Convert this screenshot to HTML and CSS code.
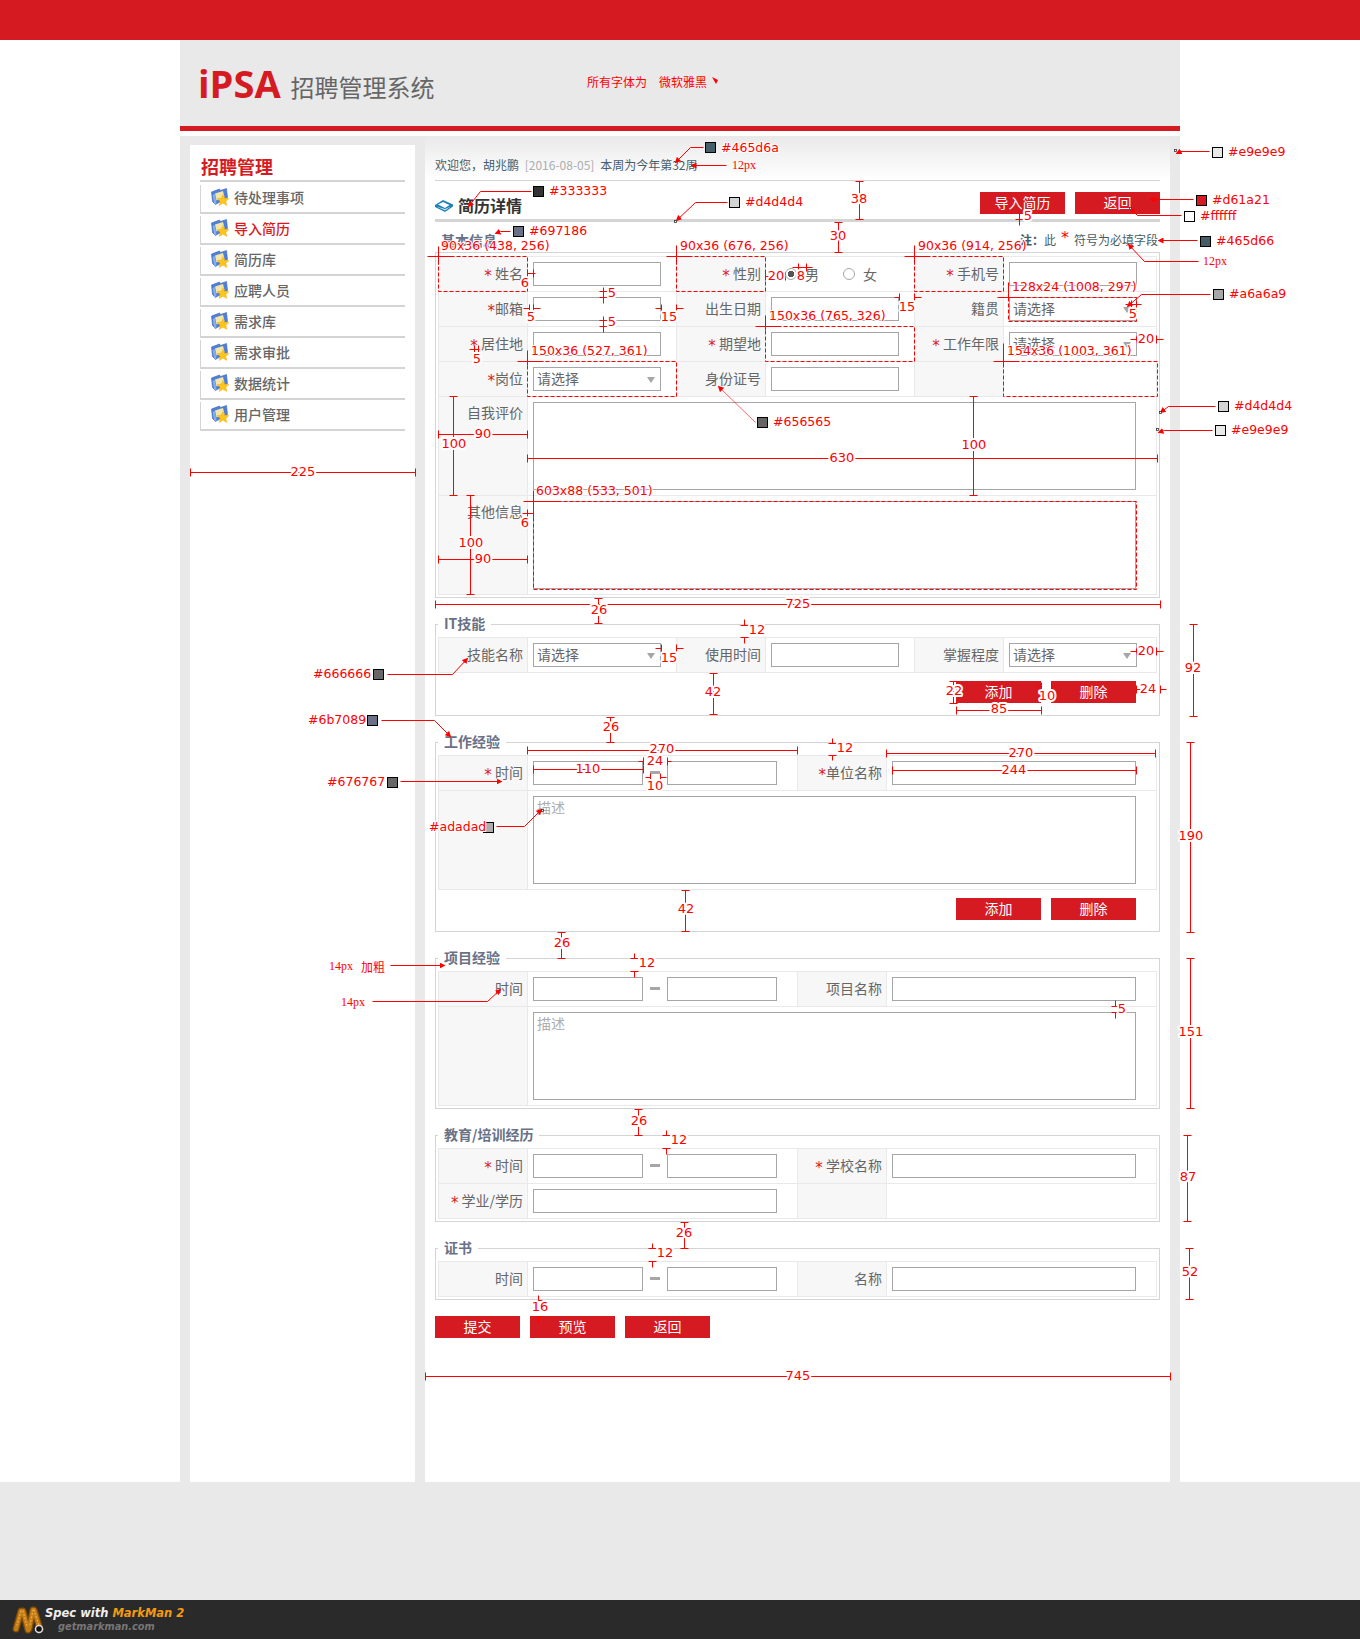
FILE: index.html

```html
<!DOCTYPE html>
<html>

<head>
<title>招聘管理系统</title>
<meta charset="UTF-8">
<link rel="stylesheet" href="styles.css">
</head>

<body>
<svg width="0" height="0" class="defs">
  <symbol id="folder" viewBox="0 0 18 18">
    <path d="M.5 4 8.500 1l1 1.500L15.500.5l1 9-12 7L1.500 13.500z" fill="#4f7fd6" stroke="#3a66b8" stroke-width=".6"/>
    <path d="M4 5.500l8-2.500 1.500 6-8 3.500z" fill="#f3e6a6"/>
    <path d="M1.500 7 4 6l1.500 9.500-2 1z" fill="#86aeea"/>
    <path d="M12 6.500l1.800 3.700 4.200.4-3.100 2.700 1 4.200L12 15.300l-3.900 2.200 1-4.200-3.100-2.700 4.200-.4z" fill="#fdc41c" stroke="#f0a810" stroke-width=".4"/>
  </symbol>
</svg>

<div class="topbar"></div>

<div class="wrap">
  <div class="head">
    <span class="logo">iPSA</span>
    <span class="sysname">招聘管理系统</span>
  </div>

  <div class="cols">
    <div class="side">
      <h2>招聘管理</h2>
      <ul>
        <li><svg class="ico"><use href="#folder"/></svg>待处理事项</li>
        <li class="on"><svg class="ico"><use href="#folder"/></svg>导入简历</li>
        <li><svg class="ico"><use href="#folder"/></svg>简历库</li>
        <li><svg class="ico"><use href="#folder"/></svg>应聘人员</li>
        <li><svg class="ico"><use href="#folder"/></svg>需求库</li>
        <li><svg class="ico"><use href="#folder"/></svg>需求审批</li>
        <li><svg class="ico"><use href="#folder"/></svg>数据统计</li>
        <li><svg class="ico"><use href="#folder"/></svg>用户管理</li>
      </ul>
    </div>

    <div class="main">
      <div class="welcome">欢迎您，胡兆鹏 <span class="date">[2016-08-05]</span> 本周为今年第32周</div>

      <div class="titlerow">
        <svg class="bookico" width="18" height="12" viewBox="0 0 18 12">
          <path d="M0 5 8 0l10 4.500v2L10 12 0 7z" fill="#1f7fb5"/>
          <path d="M3 4.500 8 2l6.500 3L10 8z" fill="#fff"/>
          <path d="M1.500 6.500 10 10.500l6-4-6 2.500z" fill="#bfe0f0"/>
        </svg>
        <h1>简历详情</h1>
        <button class="btn">导入简历</button>
        <button class="btn">返回</button>
      </div>

      <div class="noterow"><b>注：</b>此<i>*</i>符号为必填字段</div>

      <div class="fs first">
        <div class="legend">基本信息</div>
        <div class="rows">
          <div class="row r6">
            <div class="lab"><i>*</i> 姓名</div><div class="fld"><input></div>
            <div class="lab"><i>*</i> 性别</div>
            <div class="fld radios">
              <input type="radio" name="sex" checked><span>男</span>
              <input type="radio" name="sex"><span>女</span>
            </div>
            <div class="lab"><i>*</i> 手机号</div><div class="fld"><input></div>
          </div>
          <div class="row r6">
            <div class="lab"><i>*</i>邮箱</div><div class="fld"><input></div>
            <div class="lab">出生日期</div><div class="fld"><input></div>
            <div class="lab">籍贯</div><div class="fld"><div class="sel">请选择</div></div>
          </div>
          <div class="row r6">
            <div class="lab"><i>*</i> 居住地</div><div class="fld"><input></div>
            <div class="lab"><i>*</i> 期望地</div><div class="fld"><input></div>
            <div class="lab"><i>*</i> 工作年限</div><div class="fld"><div class="sel">请选择</div></div>
          </div>
          <div class="row r6">
            <div class="lab"><i>*</i>岗位</div><div class="fld"><div class="sel">请选择</div></div>
            <div class="lab">身份证号</div><div class="fld"><input></div>
            <div class="lab"></div><div class="fld"></div>
          </div>
          <div class="row wide">
            <div class="lab top">自我评价</div><div class="fld"><textarea></textarea></div>
          </div>
          <div class="row wide">
            <div class="lab top">其他信息</div><div class="fld"><textarea></textarea></div>
          </div>
        </div>
      </div>

      <div class="fs">
        <div class="legend">IT技能</div>
        <div class="rows">
          <div class="row r6">
            <div class="lab">技能名称</div><div class="fld"><div class="sel">请选择</div></div>
            <div class="lab">使用时间</div><div class="fld"><input></div>
            <div class="lab">掌握程度</div><div class="fld"><div class="sel">请选择</div></div>
          </div>
        </div>
        <div class="acts"><button class="btn">添加</button><button class="btn">删除</button></div>
      </div>

      <div class="fs">
        <div class="legend">工作经验</div>
        <div class="rows">
          <div class="row r4">
            <div class="lab"><i>*</i> 时间</div><div class="fld"><input class="d"><span class="dash"></span><input class="d"></div>
            <div class="lab"><i>*</i>单位名称</div><div class="fld"><input class="w"></div>
          </div>
          <div class="row wide">
            <div class="lab"></div><div class="fld"><textarea class="hint">描述</textarea></div>
          </div>
        </div>
        <div class="acts tight"><button class="btn">添加</button><button class="btn">删除</button></div>
      </div>

      <div class="fs">
        <div class="legend">项目经验</div>
        <div class="rows">
          <div class="row r4">
            <div class="lab">时间</div><div class="fld"><input class="d"><span class="dash"></span><input class="d"></div>
            <div class="lab">项目名称</div><div class="fld"><input class="w"></div>
          </div>
          <div class="row wide">
            <div class="lab"></div><div class="fld"><textarea class="hint">描述</textarea></div>
          </div>
        </div>
      </div>

      <div class="fs">
        <div class="legend">教育/培训经历</div>
        <div class="rows">
          <div class="row r4">
            <div class="lab"><i>*</i> 时间</div><div class="fld"><input class="d"><span class="dash"></span><input class="d"></div>
            <div class="lab"><i>*</i> 学校名称</div><div class="fld"><input class="w"></div>
          </div>
          <div class="row r4">
            <div class="lab"><i>*</i> 学业/学历</div><div class="fld"><input class="m"></div>
            <div class="lab"></div><div class="fld"></div>
          </div>
        </div>
      </div>

      <div class="fs">
        <div class="legend">证书</div>
        <div class="rows">
          <div class="row r4">
            <div class="lab">时间</div><div class="fld"><input class="d"><span class="dash"></span><input class="d"></div>
            <div class="lab">名称</div><div class="fld"><input class="w"></div>
          </div>
        </div>
      </div>

      <div class="submit"><button class="btn">提交</button><button class="btn">预览</button><button class="btn">返回</button></div>
    </div>
  </div>
</div>

<div class="under"></div>

<div class="foot">
  <svg class="mm" width="32" height="29" viewBox="0 0 32 29">
    <g fill="none" stroke-linecap="round">
      <path d="M4 24 9 6M11 6l5 19M17 24 21 5M22 5l6 19" stroke="#7d4a08" stroke-width="7"/>
      <path d="M4 24 9 6M11 6l5 19M17 24 21 5M22 5l6 19" stroke="#c47c14" stroke-width="4.500"/>
      <path d="M9 6 5 20M11 6l4 15M21 5l-3 15M22 5l5 16" stroke="#eeb050" stroke-width="1.200" stroke-dasharray="1 2.500"/>
    </g>
    <circle cx="27" cy="24" r="3.500" fill="#111" stroke="#ddd" stroke-width="1.500"/>
  </svg>
  <div class="mmtext">
    <div class="l1">Spec with <em>MarkMan 2</em></div>
    <div class="l2">getmarkman.com</div>
  </div>
</div>

<!-- markman annotations lie on top of the page -->
<svg class="marks" width="1360" height="1639" viewBox="0 0 1360 1639">
  <defs>
    <marker id="tip" markerUnits="userSpaceOnUse" markerWidth="6" markerHeight="6" refX="5" refY="3" orient="auto">
      <path d="M0 0 6 3 0 6z" fill="#f00"/>
    </marker>
  </defs>

  <g transform="translate(.5 .5)">
    <!-- selection boxes -->
    <g class="box">
      <rect x="438" y="256" width="89" height="35"/>
      <rect x="676" y="256" width="89" height="35"/>
      <rect x="914" y="256" width="89" height="35"/>
      <rect x="1008" y="297" width="128" height="24"/>
      <rect x="765" y="326" width="149" height="35"/>
      <rect x="527" y="361" width="149" height="35"/>
      <rect x="1003" y="361" width="154" height="35"/>
      <rect x="533" y="501" width="603" height="88"/>
    </g>

    <g class="ln">
      <!-- box corners -->
      <path d="M427 256H453M438 246V264M666 256H691M676 245V264M904 256H929M914 245V264"/>
      <path d="M997 297H1020M1008 282V300M755 326H780M765 315V330M517 361H540M527 350V365M993 361H1016M1003 343V365M523 501H560M533 490V505"/>

      <!-- top of page -->
      <path d="M190 472H415M190 468v8M415 468v8"/>
      <path d="M859 181V219M855 181h8M855 219h8"/>
      <path d="M838 222V252M834 222h8M834 252h8"/>
      <path d="M1019 210V225M1015 219h8"/>
      <path d="M527 273H535M527 269v8M533 269v8"/>
      <path d="M603 287V303M599 291h8M599 297h8"/>
      <path d="M603 316V332M599 320h8M599 326h8"/>
      <path d="M523 308H529M533 308H540M529 304v8M533 304v8"/>
      <path d="M655 308H661M676 308H683M661 304v8M676 304v8"/>
      <path d="M894 297H899M914 297H921M899 293v8M914 293v8"/>
      <path d="M655 648H661M676 648H683M661 644v8M676 644v8"/>
      <path d="M469 349H479M474 345v8M478 345v8"/>
      <path d="M765 276H785M765 272v8M785 272v8"/>
      <path d="M792 267H812M798 263v8M806 263v8"/>
      <path d="M1125 304H1141M1131 300v8M1136 300v8"/>
      <path d="M1130 339H1136M1156 339H1163M1136 335v8M1156 335v8"/>
      <path d="M1130 651H1136M1156 651H1163M1136 647v8M1156 647v8"/>
      <path d="M1136 689H1140M1160 689H1166M1136 685v8M1160 685v8"/>
      <path d="M953 681V703M949 681h8M949 703h8"/>
      <path d="M1036 686H1041M1051 686H1056M1041 682v8M1051 682v8"/>
      <path d="M956 710H1041M956 706v8M1041 706v8"/>

      <!-- right hand heights -->
      <path d="M1193 624V716M1189 624h8M1189 716h8"/>
      <path d="M1190 742V932M1186 742h8M1186 932h8"/>
      <path d="M1190 958V1108M1186 958h8M1186 1108h8"/>
      <path d="M1187 1135V1221M1183 1135h8M1183 1221h8"/>
      <path d="M1189 1248V1299M1185 1248h8M1185 1299h8"/>

      <!-- between the groups -->
      <path d="M435 604H1160M435 600v8M1160 600v8"/>
      <path d="M598 598V623M594 598h8M594 623h8"/>
      <path d="M744 619V625M744 637V643M740 625h8M740 637h8"/>
      <path d="M713 673V714M709 673h8M709 714h8"/>
      <path d="M610 717V742M606 717h8M606 742h8"/>
      <path d="M527 750H797M527 746v8M797 746v8"/>
      <path d="M832 738V743M832 755V760M828 743h8M828 755h8"/>
      <path d="M886 753H1155M886 749v8M1155 749v8"/>
      <path d="M892 770H1136M892 766v8M1136 766v8"/>
      <path d="M533 769H643M533 765v8M643 765v8"/>
      <path d="M638 761H643M667 761H671M643 757v8M667 757v8"/>
      <path d="M645 777H650M660 777H666M650 773v8M660 773v8"/>
      <path d="M453 396V495M449 396h8M449 495h8"/>
      <path d="M438 434H527M438 430v8M527 430v8"/>
      <path d="M470 495V594M466 495h8M466 594h8"/>
      <path d="M438 559H527M438 555v8M527 555v8"/>
      <path d="M527 458H1157M527 454v8M1157 454v8"/>
      <path d="M973 396V495M969 396h8M969 495h8"/>
      <path d="M522 513H533M527 509v8M533 509v8"/>
      <path d="M685 890V931M681 890h8M681 931h8"/>
      <path d="M561 932V958M557 932h8M557 958h8"/>
      <path d="M634 953V958M634 971V977M630 958h8M630 971h8"/>
      <path d="M1115 1000V1006M1115 1012V1018M1111 1006h8M1111 1012h8"/>
      <path d="M638 1109V1135M634 1109h8M634 1135h8"/>
      <path d="M666 1130V1135M666 1148V1154M662 1135h8M662 1148h8"/>
      <path d="M684 1222V1248M680 1222h8M680 1248h8"/>
      <path d="M652 1243V1248M652 1261V1267M648 1248h8M648 1261h8"/>
      <path d="M538 1295V1300M538 1316V1322M534 1300h8M534 1316h8"/>
      <path d="M425 1376H1170M425 1372v8M1170 1372v8"/>
    </g>

    <!-- colour call-outs -->
    <g class="ln lead">
      <path d="M703 147H690L675 162"/>
      <path d="M726 165H691"/>
      <path d="M531 191H480L468 206"/>
      <path d="M727 202H695L676 220"/>
      <path d="M510 231H500L495 233"/>
      <path d="M1209 151H1180L1176 153"/>
      <path d="M1193 199H1150"/>
      <path d="M1181 215H1137L1130 208"/>
      <path d="M1197 240H1158"/>
      <path d="M1198 261H1144L1128 244"/>
      <path d="M1210 294H1141L1127 306"/>
      <path d="M1215 406H1168L1160 412"/>
      <path d="M1212 430H1164L1158 432"/>
      <path d="M755 422 718 386" class="thin"/>
      <path d="M387 674H452L467 658"/>
      <path d="M381 720H434L450 736"/>
      <path d="M400 781H501"/>
      <path d="M496 826H524L541 809"/>
      <path d="M390 965H444"/>
      <path d="M372 1001H487L500 989"/>
    </g>

    <g class="sw">
      <rect x="705" y="142" width="10" height="10" fill="#465d6a"/>
      <rect x="533" y="186" width="10" height="10" fill="#333333"/>
      <rect x="729" y="197" width="10" height="10" fill="#d4d4d4"/>
      <rect x="513" y="226" width="10" height="10" fill="#697186"/>
      <rect x="1212" y="147" width="10" height="10" fill="#e9e9e9"/>
      <rect x="1196" y="195" width="10" height="10" fill="#d61a21"/>
      <rect x="1184" y="211" width="10" height="10" fill="#ffffff"/>
      <rect x="1200" y="236" width="10" height="10" fill="#465d66"/>
      <rect x="1213" y="289" width="10" height="10" fill="#a6a6a9"/>
      <rect x="1218" y="401" width="10" height="10" fill="#d4d4d4"/>
      <rect x="1215" y="425" width="10" height="10" fill="#e9e9e9"/>
      <rect x="757" y="417" width="10" height="10" fill="#656565"/>
      <rect x="373" y="669" width="10" height="10" fill="#666666"/>
      <rect x="367" y="715" width="10" height="10" fill="#6b7089"/>
      <rect x="387" y="777" width="10" height="10" fill="#676767"/>
      <rect x="483" y="822" width="10" height="10" fill="#adadad"/>
    </g>

    <g class="pt">
      <rect x="674" y="220" width="2" height="2"/>
      <rect x="1174" y="149" width="2" height="2"/>
      <rect x="1129" y="207" width="2" height="2"/>
      <rect x="1159" y="411" width="2" height="2"/>
      <rect x="1156" y="428" width="2" height="2"/>
      <rect x="541" y="809" width="2" height="2"/>
    </g>
  </g>

  <path d="M712 77l6 3-2 4z" fill="#f00"/>
  <text class="zh" x="587" y="81">所有字体为</text>
  <text class="zh" x="659" y="81">微软雅黑</text>

  <g class="tag">
    <text x="441" y="245">90x36 (438, 256)</text>
    <text x="680" y="245">90x36 (676, 256)</text>
    <text x="918" y="245">90x36 (914, 256)</text>
    <text x="1012" y="286">128x24 (1008, 297)</text>
    <text x="769" y="315">150x36 (765, 326)</text>
    <text x="531" y="350">150x36 (527, 361)</text>
    <text x="1007" y="350">154x36 (1003, 361)</text>
    <text x="536" y="490">603x88 (533, 501)</text>
    <text x="721" y="147">#465d6a</text>
    <text x="549" y="190">#333333</text>
    <text x="745" y="201">#d4d4d4</text>
    <text x="529" y="230">#697186</text>
    <text x="1228" y="151">#e9e9e9</text>
    <text x="1212" y="199">#d61a21</text>
    <text x="1200" y="215">#ffffff</text>
    <text x="1216" y="240">#465d66</text>
    <text x="1229" y="293">#a6a6a9</text>
    <text x="1234" y="405">#d4d4d4</text>
    <text x="1231" y="429">#e9e9e9</text>
    <text x="773" y="421">#656565</text>
    <text x="313" y="673">#666666</text>
    <text x="308" y="719">#6b7089</text>
    <text x="327" y="781">#676767</text>
    <text x="429" y="826">#adadad</text>
  </g>

  <g class="px">
    <text x="732" y="165">12px</text>
    <text x="1203" y="261">12px</text>
    <text x="329" y="966">14px <tspan class="zh" dx="5">加粗</tspan></text>
    <text x="341" y="1002">14px</text>
  </g>

  <g class="num">
    <text x="303" y="471">225</text>
    <text x="859" y="198">38</text>
    <text x="838" y="235">30</text>
    <text x="1028" y="215">5</text>
    <text x="525" y="282">6</text>
    <text x="612" y="292">5</text>
    <text x="612" y="321">5</text>
    <text x="531" y="316">5</text>
    <text x="669" y="316">15</text>
    <text x="907" y="306">15</text>
    <text x="669" y="657">15</text>
    <text x="477" y="358">5</text>
    <text x="776" y="275">20</text>
    <text x="801" y="275">8</text>
    <text x="1133" y="313">5</text>
    <text x="1146" y="338">20</text>
    <text x="1146" y="650">20</text>
    <text x="1148" y="688">24</text>
    <text x="954" y="690">22</text>
    <text x="1047" y="695">10</text>
    <text x="999" y="708">85</text>
    <text x="1193" y="667">92</text>
    <text x="1191" y="835">190</text>
    <text x="1191" y="1031">151</text>
    <text x="1188" y="1176">87</text>
    <text x="1190" y="1271">52</text>
    <text x="798" y="603">725</text>
    <text x="599" y="609">26</text>
    <text x="757" y="629">12</text>
    <text x="713" y="691">42</text>
    <text x="611" y="726">26</text>
    <text x="662" y="748">270</text>
    <text x="845" y="747">12</text>
    <text x="1021" y="752">270</text>
    <text x="1014" y="769">244</text>
    <text x="588" y="768">110</text>
    <text x="655" y="760">24</text>
    <text x="655" y="785">10</text>
    <text x="454" y="443">100</text>
    <text x="483" y="433">90</text>
    <text x="471" y="542">100</text>
    <text x="483" y="558">90</text>
    <text x="842" y="457">630</text>
    <text x="974" y="444">100</text>
    <text x="525" y="522">6</text>
    <text x="686" y="908">42</text>
    <text x="562" y="942">26</text>
    <text x="647" y="962">12</text>
    <text x="1122" y="1008">5</text>
    <text x="639" y="1120">26</text>
    <text x="679" y="1139">12</text>
    <text x="684" y="1232">26</text>
    <text x="665" y="1252">12</text>
    <text x="540" y="1306">16</text>
    <text x="798" y="1375">745</text>
  </g>
</svg>

</body>
</html>
```

FILE: styles.css

```css
html,body { margin: 0px; padding: 0px; background-color: #fff;
  font-family: "Noto Sans CJK SC", "Liberation Sans", sans-serif;
  font-size: 14px;
  color: #666;
}
body { position: relative; width: 1360px; height: 1639px; overflow: hidden; }
i { font-style: normal; }
.defs { position: absolute; }

.topbar { height: 40px; background: #d61a21; }

.wrap { width: 1000px; margin-left: 180px; }

.head {
  height: 86px;
  background: #e9e9e9;
  border-bottom: 5px solid #d61a21;
  box-sizing: content-box;
  padding-left: 18px;
  display: flex;
  align-items: center;
}
.logo { font-family: "Open Sans", sans-serif; font-weight: 700; font-size: 38px; color: #d61a21; line-height: 40px; }
.sysname { font-size: 24px; color: #666; margin-left: 10px; margin-top: 8px; line-height: 30px; }

.cols {
  margin-top: 5px;
  height: 1346px;
  background: #e9e9e9;
  padding: 0 10px;
  display: flex;
  gap: 10px;
}

/* side menu */
.side { width: 225px; margin-top: 9px; background: #fff; box-sizing: border-box; padding: 0 10px; }
.side h2 { margin: 0; padding: 9px 0 2px 1px; height: 24px; line-height: 24px; font-size: 18px; font-weight: 700; color: #d61a21; border-bottom: 2px solid #d4d4d4; box-sizing: content-box; }
.side ul { list-style: none; margin: 3px 0 0; padding: 0; }
.side li {
  height: 29px;
  margin-bottom: 2px;
  box-sizing: border-box;
  border-left: 1px solid #d4d4d4;
  border-bottom: 2px solid #d4d4d4;
  padding: 0 0 3px 10px;
  display: flex;
  align-items: center;
  font-weight: 500;
}
.side li.on { color: #d61a21; }
.ico { width: 18px; height: 18px; margin-right: 5px; flex: none; }

/* content */
.main { width: 745px; background: linear-gradient(#e9e9e9, #fff 44px); box-sizing: border-box; padding: 0 10px; }
.welcome { height: 45px; box-sizing: border-box; padding-top: 18px; line-height: 22px; font-size: 12px; color: #465d6a; border-bottom: 1px solid #d4d4d4; }
.date { color: #adadad; margin: 0 3px; }

.titlerow { height: 41px; box-sizing: border-box; border-bottom: 3px solid #d4d4d4; display: flex; align-items: flex-start; padding-top: 11px; gap: 10px; }
.bookico { margin-top: 8px; margin-right: -5px; flex: none; }
.titlerow h1 { margin: 0 auto 0 0; font-size: 16px; line-height: 26px; font-weight: 700; color: #333; }

.btn { width: 85px; height: 22px; box-sizing: border-box; padding: 0 0 2px; border: 0; background: #d61a21; color: #fff; font: 14px/20px "Noto Sans CJK SC", sans-serif; }

.noterow { height: 30px; box-sizing: border-box; padding-top: 7px; line-height: 22px; font-size: 12px; color: #465d66; text-align: right; padding-right: 2px; }
.noterow i { font-family: "DejaVu Sans", sans-serif; color: #f00; font-size: 16px; margin: 0 5px; position: relative; top: -2px; }

.fs { position: relative; border: 1px solid #d4d4d4; padding: 12px 2px 2px; margin-bottom: 26px; }
.fs.first { padding-top: 3px; }
.legend { position: absolute; left: 2px; top: -12px; padding: 0 6px; height: 20px; line-height: 20px; background: #fff; font-size: 14px; font-weight: 700; color: #697186; }
.fs.first .legend { top: -23px; left: -1px; background: none; }

.rows { border-bottom: 1px solid #e9e9e9; border-right: 1px solid #e9e9e9; }
.row { display: grid; height: 35px; box-sizing: border-box; border-top: 1px solid #e9e9e9; }
.r6 { grid-template-columns: 89px 149px 89px 149px 89px 1fr; }
.r4 { grid-template-columns: 89px 270px 89px 1fr; }
.wide { grid-template-columns: 89px 1fr; height: 99px; }
.lab { background: #f7f7f7; border-left: 1px solid #e9e9e9; text-align: right; padding-right: 4px; line-height: 32px; white-space: nowrap; }
.lab i { font-family: "DejaVu Sans", sans-serif; font-size: 15px; color: #d61a21; position: relative; top: 2px; }
.lab.top { line-height: 30px; }
.fld { border-left: 1px solid #e9e9e9; padding: 5px 0 0 5px; display: flex; align-items: flex-start; }

input { width: 128px; height: 24px; box-sizing: border-box; border: 1px solid #a6a6a9; background: #fff; padding: 0 4px; margin: 0; }
input.d { width: 110px; }
input.m { width: 244px; }
input.w { width: 244px; }
.dash { width: 10px; height: 3px; background: #a6a6a9; margin: 10px 7px 0; }

.sel { position: relative; width: 128px; height: 24px; box-sizing: border-box; border: 1px solid #a6a6a9; background: #fff; padding-left: 3px; line-height: 20px; }
.sel::after { content: ""; position: absolute; right: 5px; top: 9px; border: 4px solid transparent; border-top: 6px solid #a6a6a9; border-bottom: 0; }

textarea { display: block; width: 603px; height: 88px; box-sizing: border-box; border: 1px solid #a6a6a9; background: #fff; padding: 0 3px; margin: 0; resize: none; font: 14px/20px "Noto Sans CJK SC", sans-serif; color: #666; overflow: hidden; }
textarea.hint { color: #adadad; }

.radios { padding: 0 0 0 19px; align-items: center; }
.radios input { appearance: none; width: 12px; height: 12px; padding: 0; border-radius: 50%; border: 1px solid #a6a6a9; margin-right: 8px; }
.radios input:checked { background: radial-gradient(circle, #555 0 3px, #fff 3.5px); }
.radios span { margin-right: 24px; }

.acts { display: flex; justify-content: flex-end; gap: 10px; padding: 8px 21px 10px 0; }
.acts.tight { padding-bottom: 9px; }
.submit { display: flex; gap: 10px; margin-top: -10px; }

.under { height: 118px; background: #e9e9e9; }

.foot { height: 39px; background: #2a2a2a; display: flex; align-items: center; position: relative; }
.mm { margin-left: 12px; flex: none; }
.mmtext { margin-left: 1px; font-family: "DejaVu Sans", sans-serif; font-weight: 700; font-style: italic; }
.mmtext .l1 { font-size: 11.500px; line-height: 15px; color: #eee; }
.mmtext .l1 em { color: #f49a12; }
.mmtext .l2 { font-size: 9.800px; line-height: 12px; color: #777; padding-left: 13px; }

/* annotations */
.marks { position: absolute; left: 0; top: 0; pointer-events: none; font-family: "DejaVu Sans", sans-serif; font-size: 12.500px; fill: #f00; }
.marks text { dominant-baseline: central; }
.box rect { fill: none; stroke: #f00; stroke-dasharray: 4 2; }
.ln path { fill: none; stroke: #f00; stroke-width: 1; }
.lead path { marker-end: url(#tip); }
.lead .thin { stroke-width: .6; }
.sw rect { stroke: #000; stroke-width: 1; }
.pt rect { fill: #fff; stroke: #333; stroke-width: .8; }
.tag text { paint-order: stroke; stroke: #fff; stroke-width: 2px; stroke-linejoin: round; }
.num text { paint-order: stroke; stroke: #fff; stroke-width: 4px; stroke-linejoin: round; text-anchor: middle; font-size: 13px; }
.px text { font-family: "Liberation Serif", serif; font-size: 12px; }
.marks .zh { font-family: "Noto Sans CJK SC", sans-serif; font-size: 12px; }
```
